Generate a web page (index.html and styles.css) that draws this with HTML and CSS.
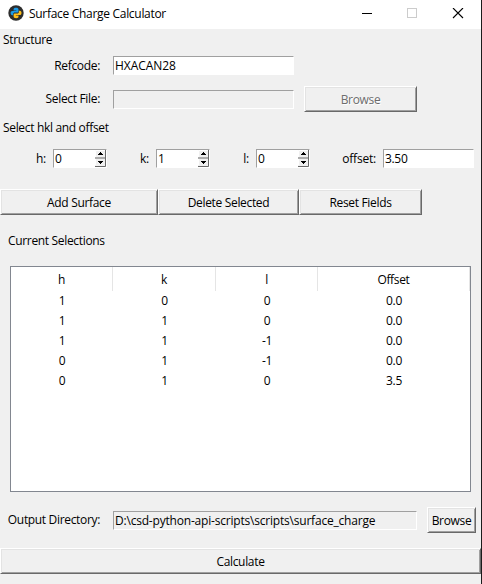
FILE: index.html
```html
<!DOCTYPE html>
<html lang="en">
<head>
<meta charset="utf-8">
<title>Surface Charge Calculator</title>
<link rel="stylesheet" href="styles.css">
</head>
<body>
<div class="window">
  <header class="titlebar">
    <svg class="logo" width="16" height="16" viewBox="0 0 16 16">
      <circle cx="8" cy="8" r="7.7" fill="#2d2d2d"/>
      <path d="M8 2.7c-1.8 0-2.4.7-2.4 1.7v1.1h2.7V6H4.4C3.2 6 2.6 6.9 2.6 8.1s.6 2.200 1.600 2.200h1V9c0-.9.7-1.500 1.600-1.500h2.500c.7 0 1.200-.6 1.200-1.300V4.400c0-1.100-.9-1.700-2.500-1.700z" fill="#1b9be8"/>
      <path d="M8.100 13.300c1.800 0 2.400-.7 2.400-1.700v-1.100H7.800V10h3.900c1.200 0 1.800-.9 1.800-2.100s-.6-2.200-1.600-2.200h-1V7c0 .9-.7 1.500-1.600 1.500H6.800c-.7 0-1.200.6-1.200 1.300v1.800c0 1.100.9 1.700 2.500 1.700z" fill="#ffbf1c"/>
    </svg>
    <h1 class="title">Surface Charge Calculator</h1>
    <svg class="controls" width="102" height="12" viewBox="0 0 102 12" fill="none">
      <path d="M0 5.500h10" stroke="#000"/>
      <rect x="45.500" y=".5" width="9" height="9" stroke="#ccc"/>
      <path d="M91 0l10 10M101 0L91 10" stroke="#000" stroke-width="1.100"/>
    </svg>
  </header>

  <h2 class="heading structure">Structure</h2>
  <div class="row refcode">
    <span class="label">Refcode:</span>
    <div class="entry file">HXACAN28</div>
  </div>
  <div class="row select">
    <span class="label">Select File:</span>
    <div class="entry readonly"></div>
    <div class="button disabled wide">Browse</div>
  </div>

  <h2 class="heading hkl">Select hkl and offset</h2>
  <div class="row indices">
    <span class="label">h:</span>
    <div class="entry">0<svg class="arrows" width="11" height="17" viewBox="0 0 11 17"><path fill="#f0f0f0" d="M0 0h11v17H0z"/><path fill="none" stroke="#696969" d="M0 8h10.500V0M0 16.500h10.500V8"/><path fill="none" stroke="#fff" d="M.5 7V.5H10M.5 15V9"/><path d="M3 5h5v-1H7V3H6V2H5v1H4v1H3zM3 11h5v1H7v1H6v1H5v-1H4v-1H3z"/></svg></div>
    <span class="label">k:</span>
    <div class="entry">1<svg class="arrows" width="11" height="17" viewBox="0 0 11 17"><path fill="#f0f0f0" d="M0 0h11v17H0z"/><path fill="none" stroke="#696969" d="M0 8h10.500V0M0 16.500h10.500V8"/><path fill="none" stroke="#fff" d="M.5 7V.5H10M.5 15V9"/><path d="M3 5h5v-1H7V3H6V2H5v1H4v1H3zM3 11h5v1H7v1H6v1H5v-1H4v-1H3z"/></svg></div>
    <span class="label">l:</span>
    <div class="entry">0<svg class="arrows" width="11" height="17" viewBox="0 0 11 17"><path fill="#f0f0f0" d="M0 0h11v17H0z"/><path fill="none" stroke="#696969" d="M0 8h10.500V0M0 16.500h10.500V8"/><path fill="none" stroke="#fff" d="M.5 7V.5H10M.5 15V9"/><path d="M3 5h5v-1H7V3H6V2H5v1H4v1H3zM3 11h5v1H7v1H6v1H5v-1H4v-1H3z"/></svg></div>
    <span class="label">offset:</span>
    <div class="entry">3.50</div>
  </div>

  <div class="actions">
    <div class="button">Add Surface</div>
    <div class="button">Delete Selected</div>
    <div class="button">Reset Fields</div>
  </div>

  <h2 class="heading current">Current Selections</h2>
  <div class="tree">
    <div class="line head"><span>h</span><span>k</span><span>l</span><span>Offset</span></div>
    <div class="line"><span>1</span><span>0</span><span>0</span><span>0.0</span></div>
    <div class="line"><span>1</span><span>1</span><span>0</span><span>0.0</span></div>
    <div class="line"><span>1</span><span>1</span><span>-1</span><span>0.0</span></div>
    <div class="line"><span>0</span><span>1</span><span>-1</span><span>0.0</span></div>
    <div class="line"><span>0</span><span>1</span><span>0</span><span>3.5</span></div>
  </div>

  <div class="row output">
    <span class="label">Output Directory:</span>
    <div class="entry path readonly">D:\csd-python-api-scripts\scripts\surface_charge</div>
    <div class="button">Browse</div>
  </div>
  <div class="button calculate">Calculate</div>
</div>
</body>
</html>
```
FILE: styles.css
```css
* { box-sizing: border-box; }

body {
  margin: 0;
  background: #f0f0f0;
  color: #000;
  font: 12px/18px "Open Sans", "Noto Sans", sans-serif;
  letter-spacing: -0.33px;
  white-space: nowrap;
}

.window {
  width: 482px;
  height: 584px;
  border-right: 1px solid #1c1c1c;
  overflow: hidden;
}

.titlebar {
  display: flex;
  height: 29px;
  padding: 5px 17px 0 8px;
  background: #fff;
}

.title {
  margin: 0 0 0 5px;
  font: inherit;
  letter-spacing: -0.3px;
}

.controls { margin: 3px 0 0 auto; }

.heading {
  height: 18px;
  margin: 0 0 0 3px;
  font: inherit;
}

.structure { margin-top: 2px; }
.hkl { margin-top: 7px; }
.current { margin: 17px 0 0 8px; }

.row {
  display: grid;
  align-items: center;
}

.label {
  padding-right: 13px;
  text-align: right;
}

.entry {
  display: flex;
  height: 19px;
  padding-left: 1px;
  border: 1px solid;
  border-color: #a0a0a0 #fff #fff #a0a0a0;
  background: #fff;
  line-height: 17px;
}

.readonly { background: #f0f0f0; }

.file { letter-spacing: -0.05px; }
.path { letter-spacing: -0.2px; }

.refcode {
  grid-template-columns: 113px 181px;
  margin-top: 7px;
}

.select {
  grid-template-columns: 113px 181px 123px;
  margin-top: 11px;
}

.wide { margin-left: 10px; }

.indices {
  grid-template-columns: 53px 54px 49px 54px 46px 54px 73px 91px;
  margin-top: 12px;
}

.indices .label {
  padding-right: 7px;
  letter-spacing: -0.2px;
}

.arrows { margin-left: auto; }

.button {
  height: 26px;
  border: 1px solid;
  border-color: #fff #696969 #696969 #fff;
  box-shadow: inset 1px 1px #e3e3e3, inset -1px -1px #a0a0a0;
  line-height: 25px;
  text-align: center;
}

.disabled {
  color: #6d6d6d;
  text-shadow: 1px 1px #fff;
}

.actions {
  display: grid;
  grid-template-columns: 158px 141px 123px;
  margin-top: 21px;
}

.tree {
  width: 461px;
  height: 226px;
  margin: 16px 0 0 10px;
  border: 1px solid #828790;
  background: #fff;
}

.line {
  display: grid;
  grid-template-columns: 102px 103px 102px 152px;
  height: 20px;
  line-height: 20px;
  text-align: center;
}

.head {
  height: 24px;
  line-height: 25px;
}

.head span {
  height: 24px;
  border-right: 1px solid #e5e5e5;
}

.output {
  grid-template-columns: 113px 304px 59px;
  margin-top: 15px;
}

.output .button { margin-left: 10px; }
.calculate { margin-top: 15px; }
```
